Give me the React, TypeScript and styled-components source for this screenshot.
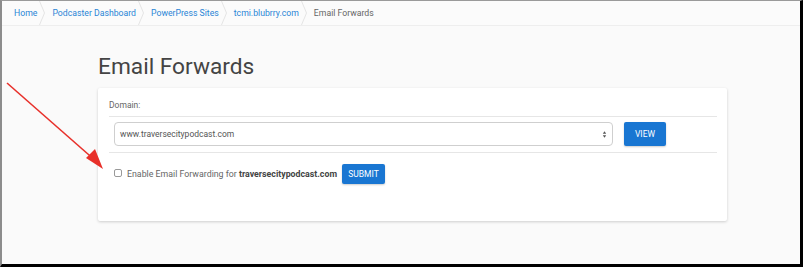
import styled, { createGlobalStyle } from "styled-components";

const GlobalStyle = createGlobalStyle`
  html, body {
    margin: 0;
    padding: 0;
    background: #fafafa;
  }
  body {
    font-family: Roboto, "Liberation Sans", Arial, sans-serif;
  }
`;

const crumbs = [
  { label: "Home", link: true },
  { label: "Podcaster Dashboard", link: true },
  { label: "PowerPress Sites", link: true },
  { label: "tcmi.blubrry.com", link: true },
  { label: "Email Forwards", link: false },
];

const App = () => {
  return (
    <>
      <GlobalStyle />
      <Frame>
        <Breadcrumbs>
          {crumbs.map((c, i) => (
            <Crumb key={c.label}>
              <CrumbText $link={c.link}>{c.label}</CrumbText>
              {i < crumbs.length - 1 && (
                <Chevron viewBox="0 0 6 25" preserveAspectRatio="none">
                  <polyline points="0.5,0 5.5,12.5 0.5,25" fill="none" stroke="#e3e3e3" strokeWidth="1" />
                </Chevron>
              )}
            </Crumb>
          ))}
        </Breadcrumbs>

        <Main>
          <Title>Email Forwards</Title>
          <Card>
            <Label>Domain:</Label>
            <Divider />
            <DomainRow>
              <SelectBox>
                <span>www.traversecitypodcast.com</span>
                <SelectArrows viewBox="0 0 6 10">
                  <path d="M3 1 L5 4 L1 4 Z" fill="#555" />
                  <path d="M3 9 L5 6 L1 6 Z" fill="#555" />
                </SelectArrows>
              </SelectBox>
              <Button $w={42} $h={24}>VIEW</Button>
            </DomainRow>
            <Divider />
            <EnableRow>
              <Checkbox />
              <EnableText>
                Enable Email Forwarding for <b>traversecitypodcast.com</b>
              </EnableText>
              <Button $w={43} $h={20}>SUBMIT</Button>
            </EnableRow>
          </Card>
        </Main>

        <Arrow viewBox="0 0 110 180">
          <line x1="7" y1="83" x2="97" y2="162" stroke="#e8302a" strokeWidth="1.6" />
          <polygon points="103,169 86,158 95,149" fill="#e8302a" />
        </Arrow>
      </Frame>
    </>
  );
};

export default App;

const Frame = styled.div`
  position: relative;
  width: 803px;
  height: 267px;
  box-sizing: border-box;
  border-top: 1px solid #9a9a9a;
  border-left: 2px solid #8c8c8c;
  border-right: 3px solid #000;
  border-bottom: 3px solid #000;
  background: #fafafa;
  overflow: hidden;
`;

const Breadcrumbs = styled.div`
  display: flex;
  align-items: stretch;
  height: 24px;
  padding-left: 12px;
  border-bottom: 1px solid #eeeeee;
  background: #fbfbfb;
`;

const Crumb = styled.div`
  display: flex;
  align-items: center;
`;

const CrumbText = styled.span<{ $link: boolean }>`
  font-size: 8.7px;
  color: ${(p) => (p.$link ? "#2a85d6" : "#666")};
  white-space: nowrap;
`;

const Chevron = styled.svg`
  width: 6px;
  height: 24px;
  margin: 0 7px 0 2px;
`;

const Main = styled.div`
  padding: 27px 0 0 96px;
  width: 629px;
`;

const Title = styled.h1`
  margin: 0 0 7px 0;
  font-size: 22.7px;
  font-weight: 400;
  color: #444;
  line-height: 28px;
`;

const Card = styled.div`
  width: 629px;
  height: 133px;
  box-sizing: border-box;
  background: #fff;
  border-radius: 2px;
  box-shadow: 0 1px 3px rgba(0, 0, 0, 0.18);
  padding: 11px 10px 0 11px;
`;

const Label = styled.div`
  font-size: 8.5px;
  color: #666;
  line-height: 12px;
  margin-bottom: 5px;
`;

const Divider = styled.div`
  height: 1px;
  background: #e6e6e6;
`;

const DomainRow = styled.div`
  display: flex;
  align-items: center;
  gap: 11px;
  padding: 5px 0 6px 5px;
`;

const SelectBox = styled.div`
  display: flex;
  align-items: center;
  justify-content: space-between;
  width: 499px;
  height: 24px;
  box-sizing: border-box;
  border: 1px solid #cfcfcf;
  border-radius: 4px;
  padding: 0 5px 0 5px;
  font-size: 8.5px;
  color: #555;
`;

const SelectArrows = styled.svg`
  width: 5px;
  height: 9px;
`;

const Button = styled.button<{ $w: number; $h: number }>`
  width: ${(p) => p.$w}px;
  height: ${(p) => p.$h}px;
  padding: 0;
  border: none;
  border-radius: 2px;
  background: #1976d2;
  color: #fff;
  font-family: Roboto, "Liberation Sans", Arial, sans-serif;
  font-size: 8.5px;
  box-shadow: 0 1px 2px rgba(0, 0, 0, 0.2);
`;

const EnableRow = styled.div`
  display: flex;
  align-items: center;
  padding: 11px 0 0 5px;
`;

const Checkbox = styled.span`
  width: 8px;
  height: 8px;
  border: 1px solid #999;
  border-radius: 2px;
  box-sizing: border-box;
  margin-right: 5px;
  margin-top: -2px;
`;

const EnableText = styled.span`
  font-size: 8.8px;
  color: #666;
  margin-right: 5px;
  white-space: nowrap;

  b {
    color: #444;
    font-weight: 700;
  }
`;

const Arrow = styled.svg`
  position: absolute;
  left: -2px;
  top: -1px;
  width: 110px;
  height: 180px;
  pointer-events: none;
`;
